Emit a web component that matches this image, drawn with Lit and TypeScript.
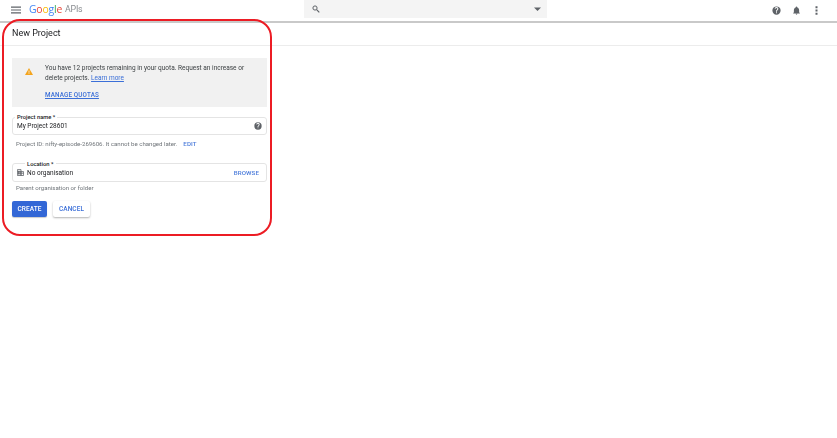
import { LitElement, html, css } from "lit";
import { customElement } from "lit/decorators.js";

const HELP = "M12 1a11 11 0 1 0 0 22 11 11 0 0 0 0-22zm1.200 18h-2.500v-2.500h2.500V19zm2.500-8.500-1.100 1.100c-.9.900-1.400 1.600-1.400 3.400h-2.500v-.6c0-1.400.5-2.600 1.400-3.500l1.500-1.600c.5-.4.700-1 .7-1.700a2.400 2.400 0 0 0-4.800 0H7a5 5 0 0 1 10 0c0 1.100-.5 2.100-1.300 2.900z";

@customElement("app-root")
export class AppRoot extends LitElement {
  static styles = css`
    :host { display: block; width: 837px; height: 438px; position: relative; overflow: hidden; background: #fff; font-family: Roboto, "Liberation Sans", sans-serif; color: #202124; }
    .page { filter: blur(0.3px); }
    .top { height: 21px; display: grid; grid-template-columns: 304px 243px 1fr; align-items: center; border-bottom: 2px solid #c9c9c9; }
    .left { display: flex; align-items: center; padding-left: 11px; padding-bottom: 1px; }
    .burger { width: 10px; height: 8px; margin-right: 8px; }
    .logo { font-size: 10.4px; letter-spacing: -0.2px; font-family: "Open Sans", Roboto, sans-serif; display: flex; margin-bottom: 2px; }
    .apis { color: #8a8d91; margin-left: 3px; font-family: Roboto, sans-serif; font-size: 8.8px; line-height: 15px; }
    .search { height: 18px; background: #f4f4f4; display: flex; align-items: center; justify-content: space-between; padding: 0 6px 0 8px; align-self: start; }
    .right { display: flex; justify-content: flex-end; align-items: center; gap: 11px; padding: 0 16.5px 1px 0; }
    .sub { height: 22px; border-bottom: 1px solid #ececec; padding-left: 12px; font-size: 9px; line-height: 20px; }
    .form { width: 255px; margin-left: 12px; padding-top: 12px; }
    .alert { height: 49px; background: #f1f1f1; display: flex; box-sizing: border-box; padding: 5px 0 0 13px; font-size: 6.5px; line-height: 10px; color: #3c4043; }
    .alert svg { margin: 5px 12px 0 0; flex: none; }
    .alert p { margin: 0; width: 205px; }
    a { color: #3b6fd8; text-decoration: underline; }
    .manage { display: block; margin-top: 7px; font-size: 6.3px; font-weight: 500; letter-spacing: 0.15px; }
    .field { position: relative; border: 1px solid #e4e4e4; border-radius: 3px; box-sizing: border-box; display: flex; align-items: center; justify-content: space-between; padding: 0 4px; font-size: 6.5px; }
    .field.name { margin-top: 10px; height: 18px; }
    .field.loc { margin-top: 15px; height: 19px; }
    .legend { position: absolute; top: -5px; background: #fff; padding: 0 2px; font-size: 5.8px; font-weight: 500; line-height: 8px; color: #202124; }
    .name .legend { left: 2px; }
    .loc .legend { left: 12px; top: -4px; }
    .org { display: flex; align-items: center; gap: 3px; }
    .link { color: #4d7ddb; font-weight: 500; font-size: 6.2px; letter-spacing: 0.1px; }
    .browse { margin-right: 3px; }
    .hint { font-size: 6.1px; color: #70757a; padding-left: 4px; line-height: 8px; }
    .h1 { margin-top: 5px; display: flex; gap: 6px; }
    .h2 { margin-top: 2px; }
    .btns { display: flex; gap: 6px; margin-top: 9px; }
    .btn { height: 16px; border-radius: 2px; font-size: 6.5px; font-weight: 500; line-height: 16px; text-align: center; letter-spacing: 0.1px; }
    .create { width: 35px; background: #3367d6; color: #fff; box-shadow: 0 1px 1px rgba(0,0,0,.2); }
    .cancel { width: 37px; background: #fff; color: #3b6fd8; box-shadow: 0 1px 2px rgba(0,0,0,.3); }
    .ring { position: absolute; left: 1.500px; top: 19px; width: 270px; height: 217px; box-sizing: border-box; border: 2.700px solid #ec1c24; border-radius: 18px; pointer-events: none; }
  `;

  render() {
    return html`
      <div class="page">
      <div class="top">
        <div class="left">
          <svg class="burger" viewBox="0 0 10 8"><path d="M0 .5h10v1.200H0zM0 3.400h10v1.200H0zM0 6.300h10v1.200H0z" fill="#5f6368"/></svg>
          <span class="logo"><span style="color:#4285f4">G</span><span style="color:#ea4335">o</span><span style="color:#fbbc05">o</span><span style="color:#4285f4">g</span><span style="color:#34a853">l</span><span style="color:#ea4335">e</span><span class="apis">APIs</span></span>
        </div>
        <div class="search">
          <svg width="8" height="8" viewBox="0 0 8 8"><circle cx="3" cy="3" r="2.100" fill="none" stroke="#5f6368" stroke-width="1"/><path d="M4.600 4.600 7.300 7.300" stroke="#5f6368" stroke-width="1.200"/></svg>
          <svg width="7" height="4" viewBox="0 0 7 4"><path d="M0 .5h7L3.500 4z" fill="#5f6368"/></svg>
        </div>
        <div class="right">
          <svg width="9" height="9" viewBox="0 0 24 24"><path fill="#5f6368" d="${HELP}"/></svg>
          <svg width="9" height="9" viewBox="0 0 24 24"><path fill="#5f6368" d="M12 23c1.300 0 2.300-1 2.300-2.300H9.700C9.700 22 10.700 23 12 23zm7-6.500V11c0-3.500-2-6.200-5-7V3a2 2 0 0 0-4 0v1c-3 .8-5 3.500-5 7v5.500L3 19v1h18v-1l-2-2.500z"/></svg>
          <svg width="9" height="9" viewBox="0 0 9 9"><path fill="#5f6368" d="M3.500.3h2v2h-2zM3.500 3.500h2v2h-2zM3.500 6.700h2v2h-2z"/></svg>
        </div>
      </div>
      <div class="sub">New Project</div>
      <div class="form">
        <div class="alert">
          <svg width="8" height="7" viewBox="0 0 8 7"><path d="M4 0l4 7H0z" fill="#f4a41d"/><path d="M3.600 2.500h.8v2.200h-.8zM3.600 5.200h.8v.8h-.8z" fill="#f1f1f1"/></svg>
          <div>
            <p>You have 12 projects remaining in your quota. Request an increase or delete projects. <a>Learn more</a></p>
            <a class="manage">MANAGE QUOTAS</a>
          </div>
        </div>
        <div class="field name">
          <span class="legend">Project name *</span>
          <span>My Project 28601</span>
          <svg width="8" height="8" viewBox="0 0 24 24"><path fill="#5f6368" d="${HELP}"/></svg>
        </div>
        <div class="hint h1"><span>Project ID: nifty-episode-269606. It cannot be changed later.</span><span class="link">EDIT</span></div>
        <div class="field loc">
          <span class="legend">Location *</span>
          <span class="org"><svg width="7" height="7" viewBox="0 0 7 7"><path fill="none" stroke="#5f6368" stroke-width=".8" d="M.4.6h3.600v5.900H.4zM4 2.600h2.600v3.900H4zM1.500 1.800v3.800M2.900 1.800v3.800M.4 2.600h3.600M.4 4.200h6.200"/></svg>No organisation</span>
          <span class="link browse">BROWSE</span>
        </div>
        <div class="hint h2">Parent organisation or folder</div>
        <div class="btns"><div class="btn create">CREATE</div><div class="btn cancel">CANCEL</div></div>
      </div>
      </div>
      <div class="ring"></div>
    `;
  }
}
